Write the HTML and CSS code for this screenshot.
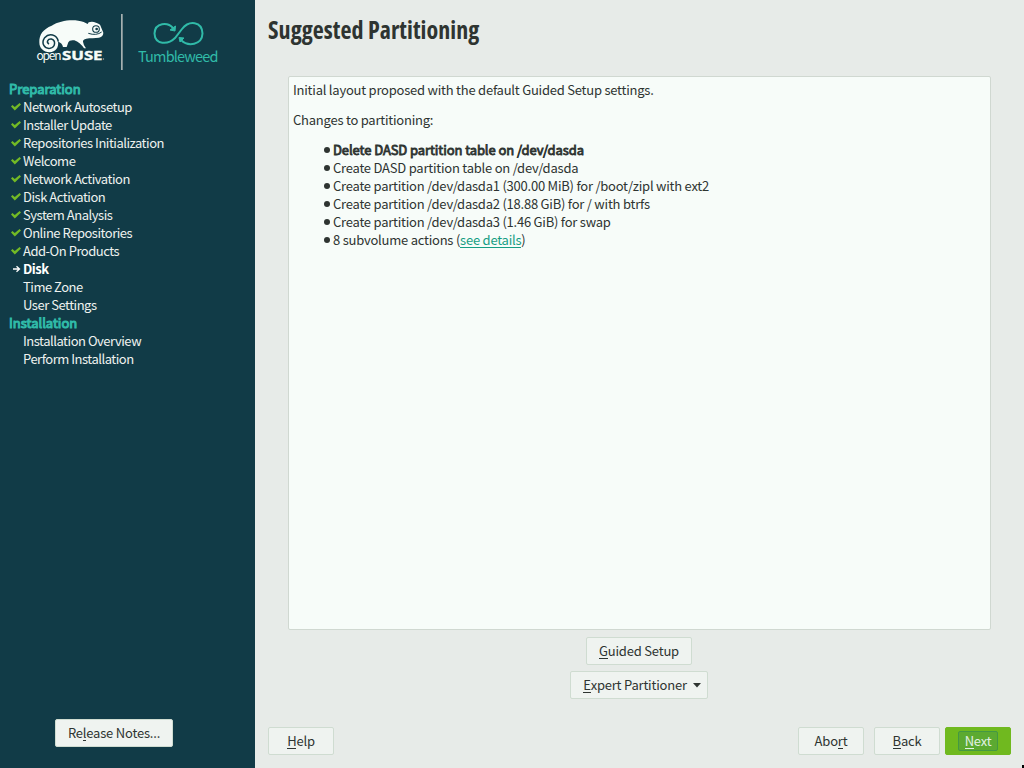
FILE: index.html
```html
<!DOCTYPE html>
<html lang="en">
<head>
<meta charset="utf-8">
<title>Suggested Partitioning</title>
<link rel="stylesheet" href="styles.css">
</head>
<body>
<div class="installer">
  <aside class="sidebar">
    <svg class="logo" width="255" height="80" viewBox="0 0 255 80">
      <g transform="translate(25 5) scale(.3333)">
        <path class="chameleon" d="M43 112C42 88 55 72 80 62C105 47 145 41 176 51L188 57L191 52Q202 48 213 53Q226 56 228 66L235 83Q235 95 222 98C210 100 195 98 184 101Q173 104 174 110Q175 119 183 130H177Q165 112 148 106Q133 104 130 112L125 126H114Q111 113 99 110C102 126 92 141 74 142C55 141 43 130 43 112Z"/>
        <path class="tail" d="M100 110C96 88 72 83 59 98C47 116 59 132 75 130C92 127 93 106 79 102C68 101 63 112 72 117"/>
        <circle class="eye" cx="213" cy="72" r="10"/><circle class="pupil" cx="215" cy="72" r="4"/>
        <path class="mouth" d="M190 85Q214 93 230 81"/>
      </g>
      <text class="logo-open" x="36.500" y="60" textLength="25">open</text>
      <text class="logo-suse" x="62" y="60" textLength="40.500" lengthAdjust="spacingAndGlyphs">SUSE</text>
      <circle cx="103.500" cy="59" r=".7" fill="#a5b0b0"/>
      <rect x="121" y="14" width="1.700" height="56" fill="#a5b0b0"/>
      <path class="loop" d="M173 28C168 22 155 22 154.500 33.500C155 45 168 45 175 38L182 29C189 20 202 21 202.500 33.500C202 45 188 47 181 40"/>
      <path class="loop-tip" d="M175.500 26L175 31L170 30Z M179 37.500L184 38L180 42Z"/>
      <text class="logo-product" x="138" y="61.500" textLength="80.500">Tumbleweed</text>
    </svg>
    <nav class="steps">
      <h2>Preparation</h2>
      <ul>
        <li class="done">Network Autosetup</li>
        <li class="done">Installer Update</li>
        <li class="done">Repositories Initialization</li>
        <li class="done">Welcome</li>
        <li class="done">Network Activation</li>
        <li class="done">Disk Activation</li>
        <li class="done">System Analysis</li>
        <li class="done">Online Repositories</li>
        <li class="done">Add-On Products</li>
        <li class="current"><svg width="8" height="8"><path d="M0 4H6M3.500 1.300L6.500 4L3.500 6.700" fill="none" stroke="#fff" stroke-width="1.300"/></svg>Disk</li>
        <li>Time Zone</li>
        <li>User Settings</li>
      </ul>
      <h2>Installation</h2>
      <ul>
        <li>Installation Overview</li>
        <li>Perform Installation</li>
      </ul>
    </nav>
    <button class="btn notes"><span>Re<u>l</u>ease Notes...</span></button>
  </aside>
  <main class="content">
    <h1>Suggested Partitioning</h1>
    <section class="summary">
      <p>Initial layout proposed with the default Guided Setup settings.</p>
      <p>Changes to partitioning:</p>
      <ul class="actions">
        <li class="destructive">Delete DASD partition table on /dev/dasda</li>
        <li>Create DASD partition table on /dev/dasda</li>
        <li>Create partition /dev/dasda1 (300.00 MiB) for /boot/zipl with ext2</li>
        <li>Create partition /dev/dasda2 (18.88 GiB) for / with btrfs</li>
        <li>Create partition /dev/dasda3 (1.46 GiB) for swap</li>
        <li>8 subvolume actions (<a href="#">see details</a>)</li>
      </ul>
    </section>
    <div class="setup">
      <button class="btn guided"><span><u>G</u>uided Setup</span></button>
      <button class="btn expert"><span><u>E</u>xpert Partitioner</span><svg width="8" height="5"><path d="M0 0H8L4 4.500Z" fill="#2e3431"/></svg></button>
    </div>
    <footer class="footer">
      <button class="btn help"><span><u>H</u>elp</span></button>
      <button class="btn"><span>Abo<u>r</u>t</span></button>
      <button class="btn"><span><u>B</u>ack</span></button>
      <button class="btn next"><span class="focus"><u>N</u>ext</span></button>
    </footer>
  </main>
  <i class="cursor"></i>
</div>
</body>
</html>
```
FILE: styles.css
```css
* { box-sizing: border-box; }
body {
  margin: 0;
  font: 13px/18px "Noto Sans CJK SC", "Noto Sans", sans-serif;
  letter-spacing: -.23px;
  color: #2e3431;
}
h1, h2, p, ul { margin: 0; padding: 0; }
ul { list-style: none; }
.installer {
  position: relative;
  display: flex;
  width: 1024px;
  height: 768px;
  overflow: hidden;
  background: #e7ebe8;
}
.sidebar {
  display: flex;
  flex-direction: column;
  width: 255px;
  background: #113b47;
  color: #eef2ef;
}
.logo { display: block; flex: none; letter-spacing: 0; }
.chameleon { fill: #f7fcf9; }
.tail, .mouth { fill: none; stroke: #113b47; stroke-width: 4.5; }
.mouth { stroke-width: 3; }
.eye { fill: #f7fcf9; stroke: #113b47; stroke-width: 3.2; }
.pupil { fill: #113b47; }
.logo-open { font-size: 12px; fill: #f7fcf9; }
.logo-suse { font: bold 13px "Open Sans", sans-serif; fill: #f7fcf9; stroke: #f7fcf9; stroke-width: .4; }
.loop { fill: none; stroke: #30baa8; stroke-width: 2; }
.loop-tip { fill: #30baa8; stroke: #30baa8; stroke-width: 1; }
.logo-product { font-size: 14.500px; fill: #30baa8; }
.steps { padding-left: 9px; letter-spacing: -.48px; }
.steps h2 {
  font-size: 13px;
  line-height: 18px;
  font-weight: 400;
  letter-spacing: 0;
  color: #30baa8;
  -webkit-text-stroke: 1px #30baa8;
}
.steps li { position: relative; padding-left: 14px; height: 18px; white-space: nowrap; }
.steps .done::before {
  content: "";
  position: absolute;
  left: 2px;
  top: 5px;
  width: 10px;
  height: 8px;
  background: #73ba25;
  clip-path: polygon(0 45%, 14% 24%, 38% 50%, 86% 0, 100% 18%, 38% 95%);
}
.steps .current { font-weight: 700; color: #fff; }
.steps .current svg { position: absolute; left: 4px; top: 5px; }
.btn {
  display: flex;
  align-items: center;
  justify-content: center;
  width: 66px;
  height: 28px;
  padding: 0;
  border: 1px solid #cfdcd1;
  border-radius: 2px;
  background: #eff3f0;
  color: #2e3431;
  font: inherit;
  letter-spacing: -.2px;
}
u { text-decoration: none; border-bottom: 1px solid currentColor; display: inline-block; line-height: 15px; }
.notes { width: 118px; margin: auto auto 21px 55px; }
.content { flex: 1; display: flex; flex-direction: column; padding: 12px 13px 13px; }
h1 {
  height: 64px;
  font: bold 24px/35px "Open Sans", sans-serif;
  font-stretch: 75%;
  letter-spacing: .06px;
  white-space: nowrap;
}
.summary {
  width: 703px;
  height: 554px;
  margin-left: 20px;
  padding: 4px 4px;
  border: 1px solid #d0d8d1;
  border-radius: 2px;
  background: #f7fcf9;
}
.summary p { margin-bottom: 12px; }
.actions li { position: relative; padding-left: 40px; }
.actions li::before { content: ""; position: absolute; left: 31px; top: 6px; width: 6px; height: 6px; border-radius: 50%; background: #2e3431; }
.actions .destructive { -webkit-text-stroke: .8px #2e3431; letter-spacing: -.08px; }
.actions a { color: #169e84; text-decoration: none; border-bottom: 1px solid; display: inline-block; line-height: 15px; }
.setup { display: flex; flex-direction: column; gap: 6px; padding-top: 7px; }
.guided { width: 106px; margin-left: 318px; }
.expert { width: 138px; margin-left: 302px; gap: 6px; padding-left: 6px; }
.footer { display: flex; gap: 10px; margin-top: auto; }
.help { margin-right: auto; }
.next { background: #70b91f; border-color: #70b91f; color: #e2f1e4; margin-left: -5px; }
.focus { width: 40px; height: 20px; line-height: 18px; border: 1px solid #449843; border-radius: 2px; background: #5caa31; }
.cursor { position: absolute; right: 0; bottom: 0; width: 2px; height: 3px; background: #000; }
```
